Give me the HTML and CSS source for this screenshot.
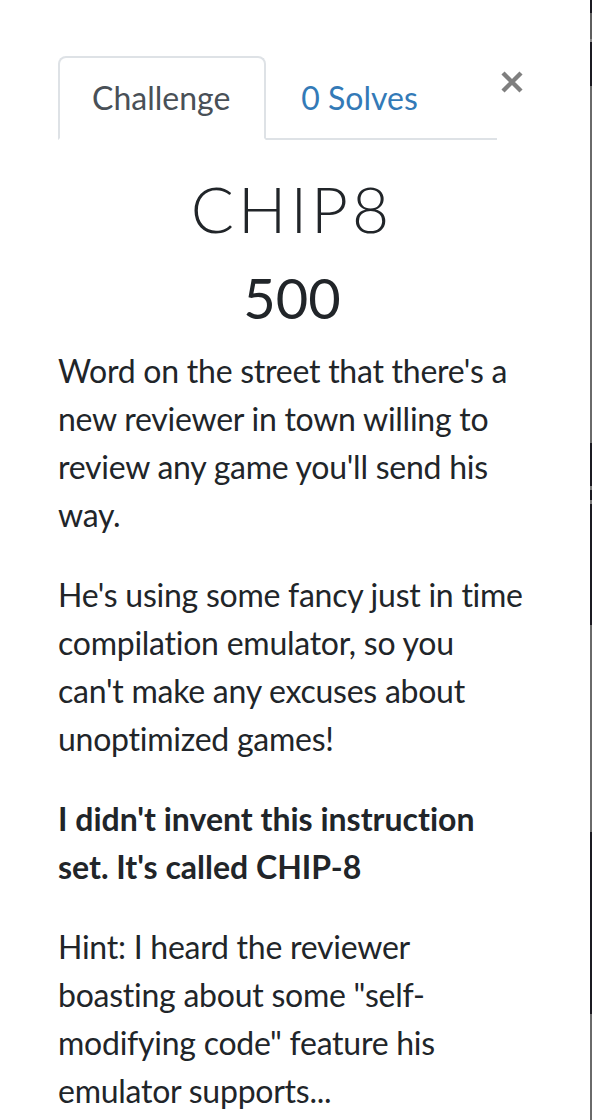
FILE: index.html
```html
<!DOCTYPE html>
<html lang="en">
<head>
<meta charset="utf-8">
<title>CHIP8</title>
<link rel="stylesheet" href="styles.css">
</head>
<body>
<div class="page">
  <div class="modal">
    <div class="header">
      <ul class="tabs">
        <li class="tab active">Challenge</li>
        <li class="tab link">0 Solves</li>
      </ul>
      <button class="close" aria-label="Close">
        <svg width="24" height="24" viewBox="0 0 24 24"><path d="M3 3 L21 21 M21 3 L3 21" stroke="#7f7f7f" stroke-width="4.4" fill="none"/></svg>
      </button>
    </div>
    <div class="content">
      <h2 class="name">CHIP8</h2>
      <h3 class="value">500</h3>
      <p>Word on the street that there's a new reviewer in town willing to review any game you'll send his way.</p>
      <p>He's using some fancy just in time compilation emulator, so you can't make any excuses about unoptimized games!</p>
      <p><strong>I didn't invent this instruction set. It's called CHIP-8</strong></p>
      <p>Hint: I heard the reviewer boasting about some "self-modifying code" feature his emulator supports...</p>
    </div>
  </div>
  <div class="edge"></div>
</div>
</body>
</html>
```
FILE: styles.css
```css
html, body {
  margin: 0;
  padding: 0;
  background: #ffffff;
}
body {
  font-family: Lato, "Open Sans", sans-serif;
  color: #212529;
  overflow: hidden;
  font-variant-ligatures: no-common-ligatures;
  font-feature-settings: "liga" 0, "clig" 0;
}
.page {
  display: flex;
  width: 592px;
  height: 1120px;
  overflow: hidden;
}
.modal {
  flex: 1;
  padding: 56px 0 0 58px;
  overflow: hidden;
}
.header {
  display: flex;
  align-items: flex-start;
}
.tabs {
  list-style: none;
  margin: 0;
  padding: 0;
  display: flex;
  width: 439px;
  border-bottom: 2px solid #dee2e6;
}
.tab {
  font-size: 32px;
  line-height: 48px;
  padding: 16px 32px;
  border: 2px solid transparent;
  border-top-left-radius: 8px;
  border-top-right-radius: 8px;
  margin-bottom: -2px;
}
.tab.active {
  color: #495057;
  background: #fff;
  border-color: #dee2e6 #dee2e6 #fff;
  padding-right: 34px;
}
.tab.link {
  color: #337ab7;
  padding-left: 33px;
}
.close {
  margin: 14px 0 0 3px;
  padding: 0;
  border: 0;
  background: none;
  width: 24px;
  height: 24px;
  display: block;
}
.close svg { display: block; }
.content {
  width: 466px;
  padding-top: 31px;
}
.name {
  margin: 0 2px 16px 0;
  text-align: center;
  font-weight: 300;
  font-size: 64px;
  line-height: 1.2;
  letter-spacing: 4px;
  text-indent: 4px;
}
.value {
  margin: 0 0 16px 2px;
  text-align: center;
  font-weight: 400;
  font-size: 56px;
  line-height: 1.2;
}
p {
  margin: 0 0 32px;
  font-size: 32px;
  line-height: 48px;
  letter-spacing: -0.25px;
}
strong {
  font-weight: 700;
  letter-spacing: 0;
}
.edge {
  width: 2px;
  flex: none;
  background: linear-gradient(to bottom,
    #1b1a21 0, #1b1a21 13px,
    #5e5e5e 13px, #5e5e5e 39px,
    #8a8a8a 39px, #8a8a8a 42px,
    #1b1a21 42px, #1b1a21 86px,
    #6a6a6a 86px, #6a6a6a 443px,
    #1b1a21 443px, #1b1a21 486px,
    #7a7a7a 486px, #7a7a7a 490px,
    #1b1a21 490px, #1b1a21 500px,
    #7a7a7a 500px, #7a7a7a 504px,
    #1b1a21 504px, #1b1a21 625px,
    #6a6a6a 625px, #6a6a6a 832px,
    #1b1a21 832px, #1b1a21 1014px,
    #6a6a6a 1014px, #6a6a6a 1120px);
}
```
